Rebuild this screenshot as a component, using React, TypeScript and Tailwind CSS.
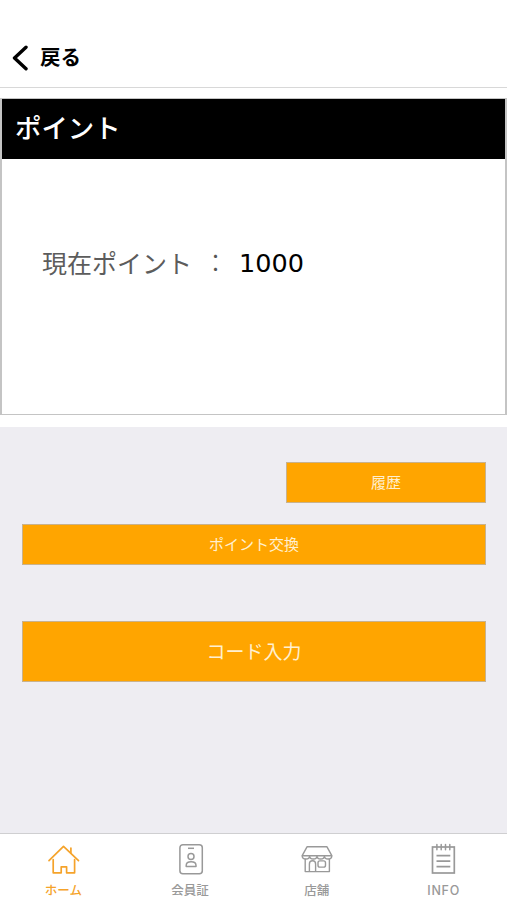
import { useState } from 'react';

const HomeIcon = () => (
  <svg className="w-10 h-10" viewBox="0 0 40 40" fill="none" stroke="currentColor" strokeWidth="1.7">
    <path d="M6 20.6L20.500 6.300l15 14.300" strokeLinecap="round" strokeLinejoin="round" />
    <path d="M10.200 19.500v13.300h8v-6h5.400v6h8V19.500M27.900 12.800V8" strokeLinecap="round" strokeLinejoin="round" />
  </svg>
);

const CardIcon = () => (
  <svg className="w-10 h-10" viewBox="0 0 40 40" fill="none" stroke="currentColor" strokeWidth="1.5">
    <rect x="9.900" y="4.700" width="22.400" height="29" rx="3" />
    <path d="M18 8.300h6" />
    <circle cx="21" cy="16.400" r="3" />
    <path d="M16.200 26.600v-1.200c0-2.200 2-3.600 4.900-3.600s4.900 1.400 4.900 3.600v1.200z" strokeLinejoin="round" />
  </svg>
);

const ShopIcon = () => (
  <svg className="w-10 h-10" viewBox="0 0 40 40" fill="none" stroke="currentColor" strokeWidth="1.400" strokeLinejoin="round">
    <path d="M10 6.800h20l4.800 8.900H5.200z" />
    <path d="M5.200 15.700c0 4.400 7.400 4.400 7.400 0c0 4.400 7.400 4.400 7.400 0c0 4.400 7.400 4.400 7.400 0c0 4.400 7.400 4.400 7.400 0" />
    <path d="M8.200 18.800v12.800h24.200V18.800" />
    <path d="M12.400 31.600v-7.700a3.100 3.100 0 0 1 6.200 0v7.700" />
    <rect x="21" y="20.900" width="7.500" height="6.200" rx="1.900" />
  </svg>
);

const InfoIcon = () => (
  <svg className="w-10 h-10" viewBox="0 0 40 40" fill="none" stroke="currentColor" strokeWidth="1.700">
    <rect x="8.500" y="7" width="21.800" height="26" />
    <path d="M12.500 15.700h13.800M12.500 21.200h13.800M12.500 26.700h13.800" />
    <path d="M12.900 4.600v5.200M17.200 4.600v5.200M21.500 4.600v5.200M25.800 4.600v5.200" strokeWidth="1.500" strokeLinecap="round" />
  </svg>
);

const tabs = [
  { id: 'home', label: 'ホーム', icon: HomeIcon },
  { id: 'card', label: '会員証', icon: CardIcon },
  { id: 'shop', label: '店舗', icon: ShopIcon },
  { id: 'info', label: 'INFO', icon: InfoIcon },
];

export default function App() {
  const [activeTab, setActiveTab] = useState('home');

  return (
    <div className="h-screen flex flex-col bg-white font-['Liberation_Sans','Noto_Sans_CJK_JP',sans-serif]">
      {/* Header */}
      <header className="h-[88px] shrink-0 flex items-end pb-[16px] pl-[10px] border-b border-[#d8d8d8]">
        <button className="flex items-center gap-[11px] text-black">
          <svg className="w-[19px] h-[26px]" viewBox="0 0 19 26" fill="none" stroke="currentColor" strokeWidth="3.400">
            <path d="M16 2.200L4.500 13L16 23.800" strokeLinecap="round" strokeLinejoin="round" />
          </svg>
          <span className="text-[20.500px] leading-[26px] font-bold">戻る</span>
        </button>
      </header>

      {/* Point balance */}
      <section className="mt-[10px] h-[317px] shrink-0 border-x-2 border-y border-[#c4c4c4]">
        <h1 className="h-[60px] flex items-center pl-[13px] pt-px bg-black text-white text-[26.400px] font-medium">ポイント</h1>
        <div className="flex items-center h-[210px] pl-10 text-[25px]">
          <span className="pt-px text-[#5c5c5c]">現在ポイント</span>
          <span className="w-[47px] text-center text-[#555] font-light">：</span>
          <span className="pb-px font-['DejaVu_Sans',sans-serif] text-[25.500px] text-black">1000</span>
        </div>
      </section>

      {/* Actions */}
      <main className="mt-3 flex-1 flex flex-col pt-[35px] pl-[22px] pr-[21px] bg-[#eeedf2] text-[#fff0d0]">
        <button className="self-end w-[200px] h-[41px] pt-0.5 bg-[#ffa500] border border-[#c9b28c] text-[15px]">履歴</button>
        <button className="mt-[21px] h-[41px] pt-0.5 bg-[#ffa500] border border-[#c9b28c] text-[15px]">ポイント交換</button>
        <button className="mt-[56px] h-[61px] pt-[3px] bg-[#ffa500] border border-[#c9b28c] text-[19px]">コード入力</button>
      </main>

      {/* Tab bar */}
      <nav className="h-[67px] shrink-0 grid grid-cols-4 border-t border-[#cfcfd1]">
        {tabs.map(({ id, label, icon: Icon }) => (
          <button
            key={id}
            onClick={() => setActiveTab(id)}
            className={`flex flex-col items-center pt-[6px] ${activeTab === id ? 'text-[#f5a32a]' : 'text-[#999]'}`}
          >
            <Icon />
            <span className={`mt-[3px] leading-4 font-medium ${id === 'info' ? "font-['Inter',sans-serif] text-[12.500px] tracking-[0.7px]" : 'text-[12.500px]'}`}>{label}</span>
          </button>
        ))}
      </nav>
    </div>
  );
}
